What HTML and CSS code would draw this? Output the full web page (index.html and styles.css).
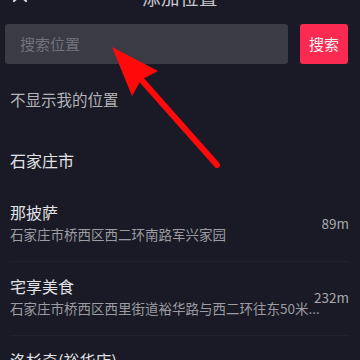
FILE: index.html
```html
<!DOCTYPE html>
<html lang="zh">
<head>
<meta charset="utf-8">
<link rel="stylesheet" href="styles.css">
</head>
<body>
<div class="page">
  <header class="header">
    <svg class="close" width="16" height="16" viewBox="0 0 16 16"><path d="M2 2 L14 14 M14 2 L2 14" stroke="#d8d8dc" stroke-width="2.2" stroke-linecap="round" fill="none"/></svg>
    <div class="title">添加位置</div>
  </header>
  <div class="search-row">
    <div class="search-input">搜索位置</div>
    <div class="search-btn">搜索</div>
  </div>
  <div class="list">
    <div class="hide-row">不显示我的位置</div>
    <div class="city-row">石家庄市</div>
    <div class="item">
      <div class="item-main">
        <div class="name">那披萨</div>
        <div class="addr">石家庄市桥西区西二环南路军兴家园</div>
      </div>
      <div class="dist">89m</div>
    </div>
    <div class="item">
      <div class="item-main">
        <div class="name">宅享美食</div>
        <div class="addr">石家庄市桥西区西里街道裕华路与西二环往东50米...</div>
      </div>
      <div class="dist">232m</div>
    </div>
    <div class="item">
      <div class="item-main">
        <div class="name">洛杉奇(裕华店)</div>
        <div class="addr">石家庄市桥西区裕华西路</div>
      </div>
      <div class="dist">310m</div>
    </div>
  </div>
  <svg class="arrow" width="360" height="360" viewBox="0 0 360 360">
    <line x1="217" y1="165" x2="138" y2="76" stroke="#ff0a0a" stroke-width="6" stroke-linecap="round"/>
    <polygon points="112,47 158,71 141,80 132,96" fill="#ff0a0a"/>
  </svg>
</div>
</body>
</html>
```
FILE: styles.css
```css
* { box-sizing: border-box; }
html, body {
  margin: 0;
  padding: 0;
  background: #191a25;
  overflow: hidden;
}
body {
  width: 360px;
  height: 360px;
  font-family: "Noto Sans CJK SC", "Noto Sans", sans-serif;
}
.page {
  position: relative;
  width: 360px;
  height: 360px;
  overflow: hidden;
}
.header {
  position: relative;
  height: 30px;
  margin-top: -18px;
  display: flex;
  align-items: center;
  justify-content: center;
}
.close {
  position: absolute;
  left: 12px;
  top: 5px;
}
.title {
  font-size: 18.5px;
  line-height: 24px;
  color: #c9c9ce;
  letter-spacing: 0.5px;
}
.search-row {
  display: flex;
  gap: 12px;
  padding: 12px 12px 0 5px;
}
.search-input {
  width: 283px;
  height: 40px;
  background: #3a3b45;
  border-radius: 3px;
  color: #71727b;
  font-size: 15px;
  line-height: 40px;
  padding-left: 15px;
}
.search-btn {
  width: 48px;
  height: 40px;
  background: #fb2a51;
  border-radius: 3px;
  color: #f4f4f6;
  font-size: 15px;
  line-height: 40px;
  text-align: center;
}
.list {
  padding: 0 11px 0 10px;
}
.hide-row {
  height: 72px;
  line-height: 70px;
  font-size: 15.5px;
  color: #b3b3b8;
}
.city-row {
  padding: 14px 0 18px;
  line-height: 20px;
  font-size: 16px;
  color: #e2e2e6;
}
.item {
  display: flex;
  align-items: center;
  padding: 13px 0 17px;
  border-bottom: 1px solid #20212c;
}
.item-main {
  flex: 1;
  display: flex;
  flex-direction: column;
  gap: 1px;
  min-width: 0;
}
.name {
  font-size: 16px;
  line-height: 22px;
  color: #e2e2e6;
}
.addr {
  font-size: 13.5px;
  line-height: 20px;
  color: #9c9ca2;
  white-space: nowrap;
}
.dist {
  font-size: 13.5px;
  color: #a9a9ae;
  line-height: 20px;
}
.arrow {
  position: absolute;
  left: 0;
  top: 0;
  pointer-events: none;
}
```
